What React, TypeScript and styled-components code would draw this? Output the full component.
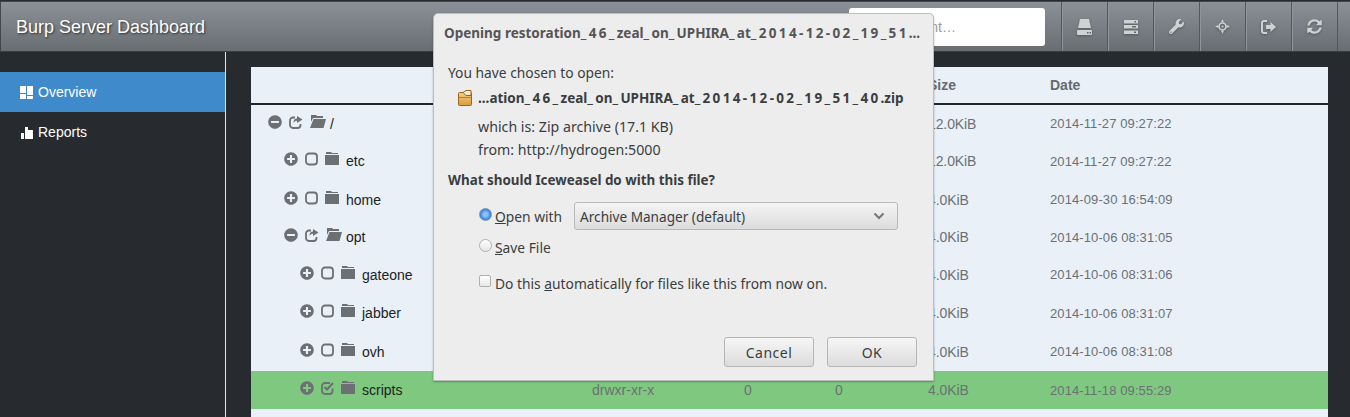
import { ReactNode } from 'react';
import styled, { createGlobalStyle } from 'styled-components';
import { FaWrench, FaSyncAlt, FaPlusCircle, FaMinusCircle } from 'react-icons/fa';

const GlobalStyle = createGlobalStyle`
  html, body {
    margin: 0;
    padding: 0;
    height: 100%;
    overflow: hidden;
    background: #272a2f;
    font-family: "Liberation Sans", Arial, sans-serif;
  }
`;

type Row = {
  name: string
  level: number
  open?: boolean
  checked?: boolean
  size: string
  date: string
}

const ROWS: Row[] = [
  { name: '/', level: 0, open: true, size: '12.0KiB', date: '2014-11-27 09:27:22' },
  { name: 'etc', level: 1, size: '12.0KiB', date: '2014-11-27 09:27:22' },
  { name: 'home', level: 1, size: '4.0KiB', date: '2014-09-30 16:54:09' },
  { name: 'opt', level: 1, open: true, size: '4.0KiB', date: '2014-10-06 08:31:05' },
  { name: 'gateone', level: 2, size: '4.0KiB', date: '2014-10-06 08:31:06' },
  { name: 'jabber', level: 2, size: '4.0KiB', date: '2014-10-06 08:31:07' },
  { name: 'ovh', level: 2, size: '4.0KiB', date: '2014-10-06 08:31:08' },
  { name: 'scripts', level: 2, checked: true, size: '4.0KiB', date: '2014-11-18 09:55:29' },
];

// the gtk font has much wider digits and underscores than anything installed here
function widen(text: string): ReactNode[] {
  return text.split(/([_\d-]+)/).map((part, i) => (
    i % 2 ? <Wide key={ i }>{ part }</Wide> : part
  ));
}

function OverviewIcon() {
  return (
    <svg width="13" height="13" viewBox="0 0 13 13" fill="#fff">
      <rect x="0" y="0" width="6" height="7" />
      <rect x="7" y="0" width="6" height="9" />
      <rect x="0" y="8" width="6" height="5" />
      <rect x="7" y="10" width="6" height="3" />
    </svg>
  );
}

function ReportsIcon() {
  return (
    <svg width="13" height="13" viewBox="0 0 13 13" fill="#fff">
      <rect x="1" y="7" width="3" height="6" />
      <rect x="5" y="1" width="3" height="12" />
      <rect x="8" y="4" width="5" height="9" />
    </svg>
  );
}

function HddIcon() {
  return (
    <svg width="15" height="16" viewBox="0 0 15 16" fill="currentColor">
      <path d="M3 0h9l2 9H1z" />
      <path d="M1 11h13a1 1 0 0 1 1 1v3a1 1 0 0 1-1 1H1a1 1 0 0 1-1-1v-3a1 1 0 0 1 1-1zm9 2v1.500h1.500V13zm2.500 0v1.500H14V13z" fillRule="evenodd" />
    </svg>
  );
}

function TasksIcon() {
  return (
    <svg width="14" height="14" viewBox="0 0 14 14" fill="currentColor" fillRule="evenodd">
      <path d="M0 0h14v3.500H0zm10.500 1v1.500H12V1z" />
      <path d="M0 5h14v3.500H0zm8 1v1.500h4V6z" />
      <path d="M0 10.500h14V14H0zm10 1V13h2v-1.500z" />
    </svg>
  );
}

function ScreenshotIcon() {
  return (
    <svg width="15" height="15" viewBox="0 0 15 15" fill="currentColor">
      <path d="M7.500 0 9 3.200H6zM7.500 15 6 11.800h3zM0 7.500 3.200 6v3zM15 7.500 11.800 9V6z" />
      <circle cx="7.500" cy="7.500" r="3.500" fill="none" stroke="currentColor" strokeWidth="1.700" />
      <circle cx="7.500" cy="7.500" r="1" />
    </svg>
  );
}

function LogOutIcon() {
  return (
    <svg width="15" height="14" viewBox="0 0 15 14" fill="none" stroke="currentColor">
      <path d="M6 1H3a2 2 0 0 0-2 2v8a2 2 0 0 0 2 2h3" strokeWidth="2" />
      <path d="M5 5h4.500V2L15 7l-5.500 5V9H5z" fill="currentColor" stroke="none" />
    </svg>
  );
}

function SquareIcon({ checked }: { checked?: boolean }) {
  return (
    <svg width="13" height="14" viewBox="0 0 13 14" fill="none" stroke="currentColor" strokeWidth="1.800">
      { checked
        ? <>
            <path d="M11.500 7.500V10a3 3 0 0 1-3 3H4a3 3 0 0 1-3-3V5a3 3 0 0 1 3-3h5" />
            <path d="M3.500 6 6 8.500 12 2" strokeWidth="2" />
          </>
        : <rect x="1" y="1.500" width="11" height="11" rx="3" /> }
    </svg>
  );
}

function ShareIcon() {
  return (
    <svg width="14" height="14" viewBox="0 0 14 14" fill="none" stroke="currentColor" strokeWidth="1.800">
      <path d="M11.500 9v1a3 3 0 0 1-3 3H4a3 3 0 0 1-3-3V5.500a3 3 0 0 1 3-3h2" />
      <path d="M8 1v2.500C5.500 3.500 4.500 5 4.500 8c1-1.800 2-2.300 3.500-2.300V8l5.500-3.500z" fill="currentColor" stroke="none" />
    </svg>
  );
}

function FolderIcon() {
  return (
    <svg width="14" height="14" viewBox="0 0 14 14" fill="currentColor">
      <path d="M1 0h5l1 1h6v1H1z" />
      <rect x="0" y="3" width="14" height="10" />
    </svg>
  );
}

function FolderOpenIcon() {
  return (
    <svg width="16" height="14" viewBox="0 0 16 14" fill="currentColor">
      <path d="M1 0h5l1 1h6v2H3L1 7z" />
      <path d="M3.500 4H16l-2.500 9H0z" />
    </svg>
  );
}

function ZipIcon() {
  return (
    <svg width="15" height="16" viewBox="0 0 15 16">
      <defs>
        <linearGradient id="zip" x1="0" y1="0" x2="0" y2="1">
          <stop offset="0" stopColor="#f3d08c" />
          <stop offset="1" stopColor="#d99a3c" />
        </linearGradient>
      </defs>
      <rect x="0.500" y="2.500" width="13" height="13" rx="1" fill="url(#zip)" stroke="#9a6414" />
      <path d="M5 2.500 8 .5h5v5H8z" fill="#f5ecd8" stroke="#9a6414" />
      <path d="M.5 7.500h13" stroke="#b57d25" />
    </svg>
  );
}

export default function App() {
  const rows = ROWS.map(({ name, level, open, checked, size, date }) => (
    <TableRow key={ name } $open={ open } $selected={ checked }>
      <NameCell $level={ level }>
        <Icons>
          { open ? <FaMinusCircle /> : <FaPlusCircle /> }
          { open ? <ShareIcon /> : <SquareIcon checked={ checked } /> }
          { open ? <FolderOpenIcon /> : <FolderIcon /> }
        </Icons>
        <Name $open={ open }>{ name }</Name>
      </NameCell>
      <Perm>drwxr-xr-x</Perm>
      <Count>0</Count>
      <Count>0</Count>
      <Size>{ size }</Size>
      <Stamp>{ date }</Stamp>
    </TableRow>
  ));

  return (
    <>
      <GlobalStyle />
      <Header>
        <Brand>Burp Server Dashboard</Brand>
        <Search placeholder="Search client…" />
        <Tools>
          <Tool><HddIcon /></Tool>
          <Tool><TasksIcon /></Tool>
          <Tool><FaWrench /></Tool>
          <Tool><ScreenshotIcon /></Tool>
          <Tool><LogOutIcon /></Tool>
          <Tool><FaSyncAlt /></Tool>
        </Tools>
      </Header>
      <Body>
        <Sidebar>
          <NavItem $active><OverviewIcon />Overview</NavItem>
          <NavItem><ReportsIcon />Reports</NavItem>
        </Sidebar>
        <Main>
          <Panel>
            <HeadRow>
              <span />
              <span />
              <span />
              <span />
              <span>Size</span>
              <span>Date</span>
            </HeadRow>
            { rows }
          </Panel>
        </Main>
      </Body>
      <Dialog>
        <DialogTitle>{ widen('Opening restoration_46_zeal_on_UPHIRA_at_2014-12-02_19_51...') }</DialogTitle>
        <Prompt>You have chosen to open:</Prompt>
        <FileLine>
          <ZipIcon />
          <FileName>{ widen('...ation_46_zeal_on_UPHIRA_at_2014-12-02_19_51_40.zip') }</FileName>
        </FileLine>
        <Meta>which is: Zip archive (17.1 KB)</Meta>
        <Meta>from: http://hydrogen:5000</Meta>
        <Question>What should Iceweasel do with this file?</Question>
        <Choice>
          <Radio $on />
          <Label><u>O</u>pen with</Label>
          <Select>
            Archive Manager (default)
            <svg width="12" height="8" viewBox="0 0 12 8" fill="none" stroke="#777" strokeWidth="2">
              <path d="M1.500 1.500 6 6l4.500-4.500" />
            </svg>
          </Select>
        </Choice>
        <SaveChoice>
          <Radio />
          <Label><u>S</u>ave File</Label>
        </SaveChoice>
        <AutoChoice>
          <Check />
          <Label>Do this <u>a</u>utomatically for files like this from now on.</Label>
        </AutoChoice>
        <Buttons>
          <Button>Cancel</Button>
          <Button>OK</Button>
        </Buttons>
      </Dialog>
    </>
  )
}

const Header = styled.header`
  height: 51px;
  box-sizing: border-box;
  margin-top: 1px;
  border-top: 1px solid #43464a;
  border-left: 1px solid #43464a;
  border-bottom: 1px solid #3a3d41;
  background: linear-gradient(to bottom, #8b9197, #686d72);
  display: flex;
  align-items: center;
  padding-left: 15px;
`;

const Brand = styled.div`
  flex: 1;
  padding-top: 2px;
  color: #fff;
  font-size: 18px;
  text-shadow: 1px 1px 2px #333;
`;

const Search = styled.input`
  width: 196px;
  height: 38px;
  box-sizing: border-box;
  margin: 1px 16px 0 0;
  padding: 0 12px;
  border: 0;
  border-radius: 3px;
  background: #fff;
  font-family: inherit;
  font-size: 14px;
  &::placeholder { color: #999; }
`;

const Tools = styled.div`
  display: flex;
  align-self: stretch;
  padding-right: 13px;
`;

const Tool = styled.div`
  width: 46px;
  box-sizing: border-box;
  display: flex;
  align-items: center;
  justify-content: center;
  border-left: 1px solid #55595e;
  box-shadow: inset 1px 0 0 #8f9499;
  color: #cfd2d4;
  font-size: 15px;
  svg { filter: drop-shadow(0 1px 1px #555); }
  &:last-child { box-shadow: inset 1px 0 0 #8f9499, 1px 0 0 #55595e; }
`;

const Body = styled.div`
  display: flex;
  height: calc(100vh - 52px);
`;

const Sidebar = styled.nav`
  width: 226px;
  box-sizing: border-box;
  flex: none;
  padding-top: 20px;
  border-right: 1px solid #e4e6e8;
`;

const NavItem = styled.div<{ $active?: boolean }>`
  height: 40px;
  display: flex;
  align-items: center;
  gap: 5px;
  padding-left: 20px;
  background: ${ ({ $active }) => $active ? '#3f8acb' : 'transparent' };
  color: #fff;
  font-size: 14px;
`;

const Main = styled.main`
  flex: 1;
  min-width: 0;
  padding: 15px 22px 0 25px;
`;

const Panel = styled.section`
  background: #e9f0f8;
  height: 100%;
  color: #6c7075;
  font-size: 13px;
`;

const COLUMNS = '341px 152px 91px 93px 122px 1fr';

const HeadRow = styled.div`
  display: grid;
  grid-template-columns: ${ COLUMNS };
  height: 38px;
  box-sizing: border-box;
  align-items: center;
  border-bottom: 2px solid #22252a;
  font-weight: bold;
  font-size: 14px;
  color: #666a70;
`;

const TableRow = styled.div<{ $open?: boolean, $selected?: boolean }>`
  display: grid;
  grid-template-columns: ${ COLUMNS };
  height: ${ ({ $open }) => $open ? '37px' : '38.4px' };
  align-items: center;
  background: ${ ({ $selected }) => $selected ? '#7fc87f' : 'transparent' };
`;

const Perm = styled.span`
  font-size: 14px;
`;

const Count = styled.span`
  font-size: 14px;
`;

const Size = styled.span`
  font-size: 14px;
  letter-spacing: -.1px;
`;

const Stamp = styled.span`
  letter-spacing: .1px;
`;

const NameCell = styled.div<{ $level: number }>`
  display: flex;
  align-items: center;
  padding-left: ${ ({ $level }) => 17 + $level * 16 }px;
`;

const Icons = styled.span`
  display: flex;
  align-items: center;
  gap: 7px;
  color: #6c7075;
  font-size: 14px;
  margin-top: -4px;
`;

const Name = styled.span<{ $open?: boolean }>`
  color: #222;
  font-size: 14px;
  margin-left: ${ ({ $open }) => $open ? '4px' : '7px' };
`;

const Dialog = styled.div`
  position: absolute;
  left: 433px;
  top: 13px;
  width: 501px;
  height: 368px;
  box-sizing: border-box;
  padding: 0 14px;
  background: #ededed;
  border: 1px solid #bdbdbd;
  border-top-left-radius: 5px;
  border-top-right-radius: 5px;
  box-shadow: 0 1px 2px rgba(0, 0, 0, .3);
  color: #3a3e40;
  font-family: "Noto Sans", sans-serif;
  font-size: 13.8px;
  display: flex;
  flex-direction: column;
`;

const Wide = styled.span`
  letter-spacing: 2.35px;
`;

const DialogTitle = styled.div`
  margin: 10px 0 0 -4px;
  font-size: 13.5px;
  font-weight: bold;
  color: #555;
  white-space: nowrap;
`;

const Prompt = styled.div`
  margin-top: 21px;
`;

const FileLine = styled.div`
  display: flex;
  align-items: center;
  gap: 5px;
  margin: 7px 0 6px 10px;
`;

const FileName = styled.span`
  font-size: 13.5px;
  font-weight: bold;
  white-space: nowrap;
`;

const Meta = styled.div`
  margin: 5px 0 0 30px;
  line-height: 18px;
  font-size: 14.2px;
`;

const Question = styled.div`
  margin-top: 12px;
  font-size: 13.4px;
  font-weight: bold;
`;

const Choice = styled.div`
  display: flex;
  align-items: center;
  margin: 13px 0 0 31px;
  height: 28px;
`;

const SaveChoice = styled(Choice)`
  margin-top: 3px;
`;

const AutoChoice = styled(Choice)`
  margin-top: 8px;
`;

const Radio = styled.span<{ $on?: boolean }>`
  width: 13px;
  height: 13px;
  box-sizing: border-box;
  border-radius: 50%;
  border: 1px solid ${ ({ $on }) => $on ? '#7a95b5' : '#b0b0b0' };
  background: ${ ({ $on }) => $on
    ? 'radial-gradient(circle, #8cc0f5 0 2px, #3f86dc 5px)'
    : 'linear-gradient(#fff, #e6e6e6)' };
  margin: 0 3px 4px 0;
`;

const Check = styled.span`
  width: 12px;
  height: 12px;
  box-sizing: border-box;
  border: 1px solid #b0b0b0;
  border-radius: 2px;
  background: linear-gradient(#fff, #e8e8e8);
  margin: 0 4px 4px 0;
`;

const Label = styled.span`
  white-space: nowrap;
`;

const Select = styled.div`
  width: 324px;
  height: 28px;
  box-sizing: border-box;
  margin-left: 12px;
  padding: 0 12px 0 5px;
  border: 1px solid #b9b9b9;
  border-radius: 3px;
  background: linear-gradient(#f4f4f4, #dcdcdc);
  display: flex;
  align-items: center;
  justify-content: space-between;
  font-size: 13.6px;
`;

const Buttons = styled.div`
  margin-top: auto;
  padding-bottom: 13px;
  display: flex;
  justify-content: flex-end;
  gap: 13px;
  margin-right: 2px;
`;

const Button = styled.div`
  width: 90px;
  height: 30px;
  box-sizing: border-box;
  border: 1px solid #b5b5b5;
  border-radius: 3px;
  background: linear-gradient(#f6f6f6, #dcdcdc);
  display: flex;
  align-items: center;
  justify-content: center;
  font-size: 14px;
  letter-spacing: .5px;
`;
